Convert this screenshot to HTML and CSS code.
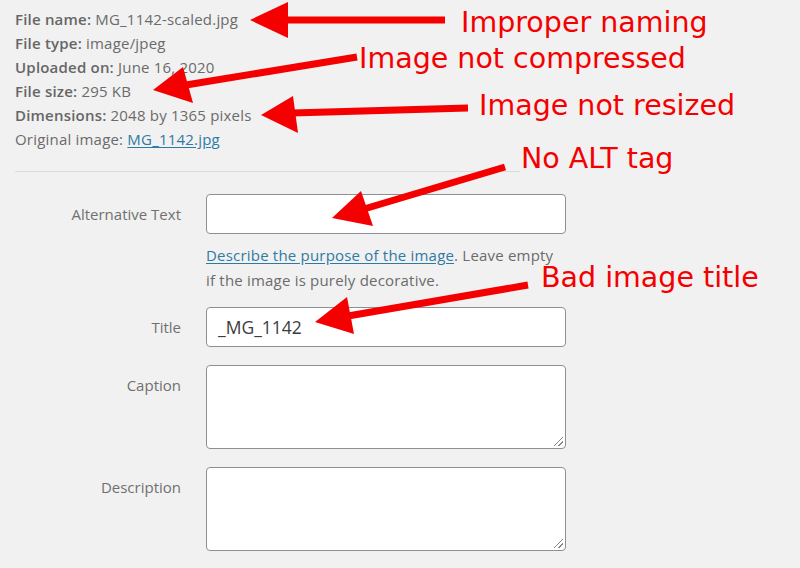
FILE: index.html
```html
<!DOCTYPE html>
<html lang="en">
<head>
<meta charset="utf-8">
<title>Attachment details</title>
<link rel="stylesheet" href="styles.css">
</head>
<body>
<div class="page">
  <div class="details">
    <div class="line"><strong>File name:</strong> MG_1142-scaled.jpg</div>
    <div class="line"><strong>File type:</strong> image/jpeg</div>
    <div class="line"><strong>Uploaded on:</strong> June 16, 2020</div>
    <div class="line"><strong>File size:</strong> 295 KB</div>
    <div class="line"><strong>Dimensions:</strong> 2048 by 1365 pixels</div>
    <div class="line">Original image: <a class="link" href="#">MG_1142.jpg</a></div>
  </div>
  <hr class="sep">
  <div class="form">
    <label class="label">Alternative Text</label>
    <div class="field">
      <div class="input"></div>
      <p class="help"><a class="link" href="#">Describe the purpose of the image</a>. Leave empty<br>if the image is purely decorative.</p>
    </div>
    <label class="label">Title</label>
    <div class="field"><div class="input title-input">_MG_1142</div></div>
    <label class="label">Caption</label>
    <div class="field"><div class="textarea"><span class="grip"></span></div></div>
    <label class="label">Description</label>
    <div class="field"><div class="textarea"><span class="grip"></span></div></div>
  </div>

  <svg class="notes" width="800" height="568" viewBox="0 0 800 568">
    <g class="arrow">
      <line x1="445" y1="20" x2="284" y2="20"/>
      <polygon points="250,20 288,2 288,38"/>
      <line x1="357" y1="57" x2="186" y2="85"/>
      <polygon points="153,90 183,67 193,103"/>
      <line x1="468" y1="108" x2="292" y2="113"/>
      <polygon points="261,115 293,96 298,133"/>
      <line x1="505" y1="167" x2="364" y2="209"/>
      <polygon points="332,218 361,191 373,226"/>
      <line x1="528" y1="285" x2="348" y2="316"/>
      <polygon points="315,322 347,297 354,334"/>
    </g>
    <g class="note-text">
      <text x="461" y="32">Improper naming</text>
      <text x="359" y="68">Image not compressed</text>
      <text x="479" y="115">Image not resized</text>
      <text x="521" y="168">No ALT tag</text>
      <text x="541" y="287">Bad image title</text>
    </g>
  </svg>
</div>
</body>
</html>
```

FILE: styles.css
```css
* { box-sizing: border-box; }
html, body { margin: 0; padding: 0; }
body {
  background: #f1f1f1;
  font-family: "Open Sans", "Noto Sans", sans-serif;
  font-size: 15px;
  color: #6b6b6b;
  width: 800px;
  height: 568px;
  overflow: hidden;
}
.page { position: relative; width: 800px; height: 568px; }
.details { padding: 7px 0 0 15px; }
.line { line-height: 24px; white-space: nowrap; letter-spacing: 0.2px; }
.line strong { font-weight: 600; color: #666; }
.link { color: #2f7aa3; text-decoration: underline; text-underline-offset: 2px; }
.sep {
  margin: 20px 0 0 15px;
  width: 505px;
  border: 0;
  border-top: 1px solid #dcdcdc;
  height: 0;
}
.form {
  display: grid;
  grid-template-columns: 181px 360px;
  column-gap: 25px;
  row-gap: 18px;
  margin-top: 22px;
}
.label {
  text-align: right;
  line-height: 40px;
  white-space: nowrap;
  color: #707070;
}
.input {
  height: 40px;
  background: #fff;
  border: 1px solid #8c8f94;
  border-radius: 4px;
}
.title-input {
  font-size: 17.5px;
  color: #3c3c3c;
  line-height: 38px;
  padding-left: 11px;
}
.help {
  margin: 9px 0 -4px;
  line-height: 25px;
  white-space: nowrap;
  letter-spacing: 0.2px;
}
.textarea {
  position: relative;
  height: 84px;
  background: #fff;
  border: 1px solid #8c8f94;
  border-radius: 4px;
}
.grip {
  position: absolute;
  right: 2px;
  bottom: 2px;
  width: 9px;
  height: 9px;
  background:
    linear-gradient(135deg, transparent 45%, #888 45%, #888 55%, transparent 55%, transparent 72%, #888 72%, #888 82%, transparent 82%);
}
.notes { position: absolute; left: 0; top: 0; pointer-events: none; }
.arrow line { stroke: #f40000; stroke-width: 7; }
.arrow polygon { fill: #f40000; }
.note-text text {
  fill: #f40000;
  font-family: "DejaVu Sans", sans-serif;
  font-size: 28.5px;
}
```
